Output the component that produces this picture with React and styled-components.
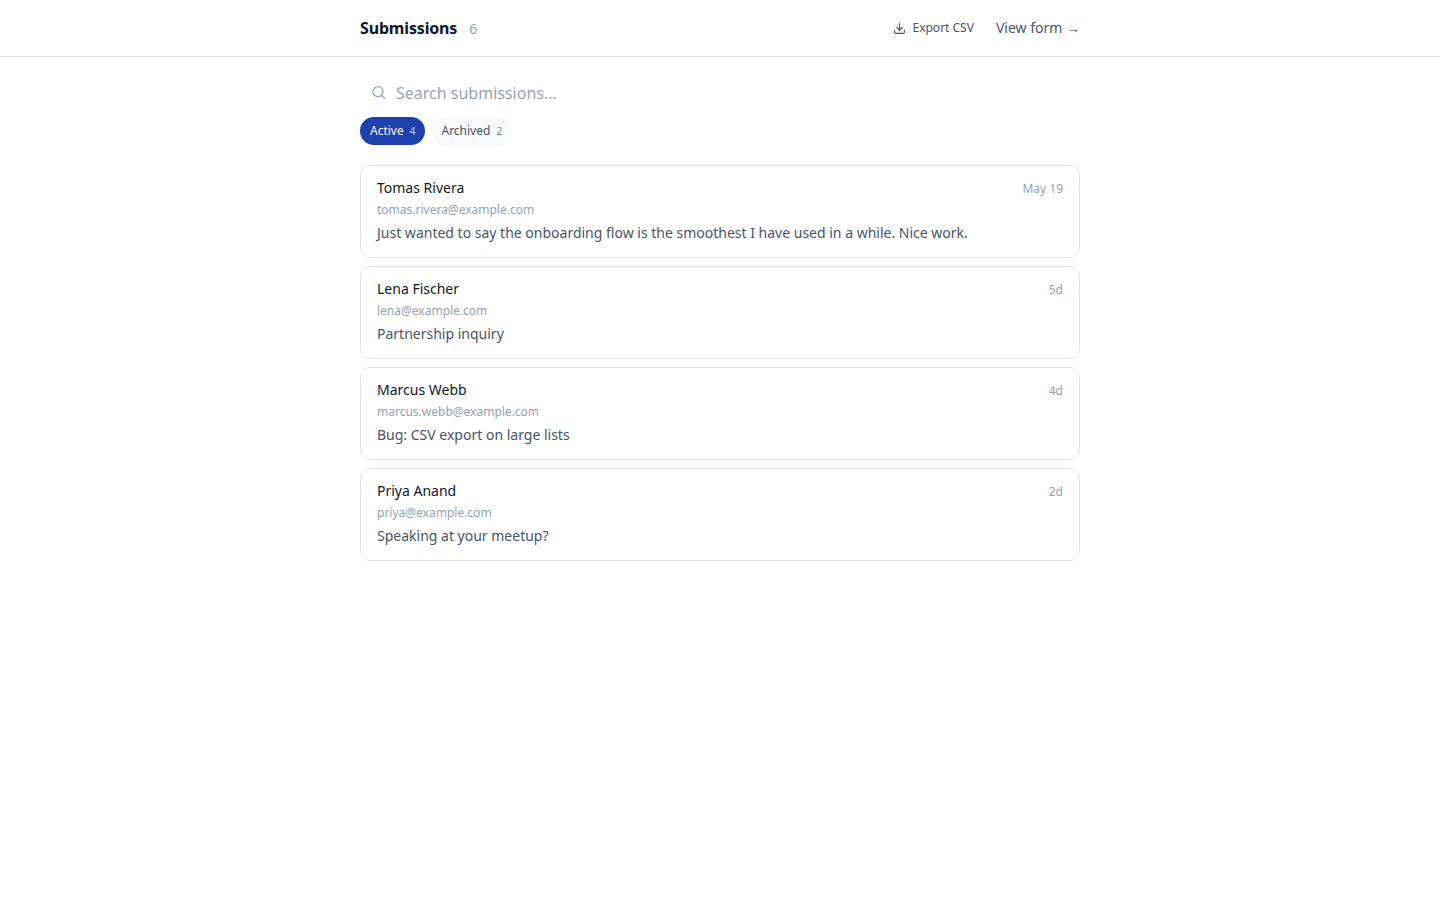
import React, { useState } from "react";
import styled, { createGlobalStyle } from "styled-components";
import { Download } from "lucide-react";

const GlobalStyle = createGlobalStyle`
  *, *::before, *::after { box-sizing: border-box; }
  body {
    margin: 0;
    background: #ffffff;
    color: #0f172a;
    font-family: "Noto Sans", sans-serif;
    font-size: 14px;
    line-height: 20px;
  }
  button, input { font: inherit; color: inherit; }
`;

const Header = styled.header`
  background: #ffffff;
  border-bottom: 1px solid #e2e4e9;
`;

const Container = styled.div`
  width: 100%;
  max-width: 752px;
  margin: 0 auto;
  padding: 0 16px;
`;

const HeaderRow = styled(Container)`
  display: flex;
  align-items: center;
  justify-content: space-between;
  min-height: 56px;
`;

const TitleGroup = styled.div`
  display: flex;
  align-items: baseline;
  gap: 12px;
`;

const Title = styled.h1`
  margin: 0;
  font-size: 16px;
  line-height: 24px;
  font-weight: 700;
  letter-spacing: -0.01em;
`;

const Total = styled.span`
  color: #94a3b8;
`;

const Actions = styled.div`
  display: flex;
  align-items: center;
  gap: 12px;
`;

const ExportButton = styled.button`
  display: inline-flex;
  align-items: center;
  gap: 6px;
  padding: 6px 10px;
  border: 0;
  border-radius: 8px;
  background: transparent;
  color: #475569;
  font-size: 12px;
  line-height: 16px;
  cursor: pointer;
`;

const ViewLink = styled.a`
  color: #475569;
  text-decoration: none;
`;

const Main = styled(Container).attrs({ as: "main" })`
  padding-top: 16px;
  padding-bottom: 32px;
`;

const SearchField = styled.label`
  display: flex;
  align-items: center;
  gap: 9px;
  height: 40px;
  padding: 0 11px;
  color: #94a3b8;
`;

const SearchInput = styled.input`
  flex: 1;
  min-width: 0;
  padding: 0;
  border: 0;
  outline: 0;
  background: transparent;
  color: #0f172a;
  font-size: 16px;
  line-height: 24px;
  &::placeholder { color: #9ca3af; opacity: 1; }
`;

const Filters = styled.div`
  display: flex;
  gap: 6px;
  margin: 4px 0 20px;
`;

const FilterPill = styled.button`
  display: inline-flex;
  align-items: center;
  gap: 6px;
  height: 28px;
  padding: 0 10px;
  border: 0;
  border-radius: 14px;
  background: ${(p) => (p.$active ? "#1e40af" : "#f7f9fb")};
  color: ${(p) => (p.$active ? "#ffffff" : "#475569")};
  font-size: 12px;
  line-height: 16px;
  cursor: pointer;
`;

const PillCount = styled.span`
  font-size: 10px;
  opacity: 0.7;
`;

const List = styled.ul`
  display: flex;
  flex-direction: column;
  gap: 8px;
  margin: 0;
  padding: 0;
  list-style: none;
`;

const Card = styled.li`
  display: flex;
  flex-direction: column;
  gap: 4px;
  padding: 12px 16px 14px;
  border: 1px solid #e2e4e9;
  border-radius: 10px;
  background: #ffffff;
`;

const CardHead = styled.div`
  display: flex;
  align-items: baseline;
  justify-content: space-between;
  gap: 12px;
`;

const Name = styled.span`
  color: #0f172a;
`;

const Meta = styled.span`
  color: #94a3b8;
  font-size: 12px;
  line-height: 16px;
`;

const Message = styled.p`
  margin: 0;
  color: #475569;
  line-height: 21px;
`;

const submissions = [
  { name: "Tomas Rivera", email: "tomas.rivera@example.com", date: "May 19", message: "Just wanted to say the onboarding flow is the smoothest I have used in a while. Nice work." },
  { name: "Lena Fischer", email: "lena@example.com", date: "5d", message: "Partnership inquiry" },
  { name: "Marcus Webb", email: "marcus.webb@example.com", date: "4d", message: "Bug: CSV export on large lists" },
  { name: "Priya Anand", email: "priya@example.com", date: "2d", message: "Speaking at your meetup?" },
];

const filters = [
  { label: "Active", count: 4 },
  { label: "Archived", count: 2 },
];

function SearchIcon() {
  return (
    <svg
      width="16"
      height="16"
      viewBox="0 0 16 16"
      fill="none"
      stroke="currentColor"
      strokeWidth="1.3"
      strokeLinecap="round"
      aria-hidden="true"
    >
      <circle cx="7" cy="6.7" r="5" />
      <path d="M10.7 10.4 14 13.6" />
    </svg>
  );
}

export default function App() {
  const [filter, setFilter] = useState("Active");
  const [query, setQuery] = useState("");

  return (
    <>
      <GlobalStyle />
      <Header>
        <HeaderRow>
          <TitleGroup>
            <Title>Submissions</Title>
            <Total>6</Total>
          </TitleGroup>
          <Actions>
            <ExportButton type="button">
              <Download size={13} aria-hidden="true" />
              Export CSV
            </ExportButton>
            <ViewLink href="#form">View form →</ViewLink>
          </Actions>
        </HeaderRow>
      </Header>
      <Main>
        <SearchField>
          <SearchIcon />
          <SearchInput
            type="text"
            aria-label="Search submissions"
            placeholder="Search submissions…"
            value={query}
            onChange={(e) => setQuery(e.target.value)}
          />
        </SearchField>
        <Filters>
          {filters.map((f) => (
            <FilterPill
              key={f.label}
              type="button"
              $active={filter === f.label}
              aria-pressed={filter === f.label}
              onClick={() => setFilter(f.label)}
            >
              {f.label}
              <PillCount>{f.count}</PillCount>
            </FilterPill>
          ))}
        </Filters>
        <List>
          {submissions.map((s) => (
            <Card key={s.email}>
              <CardHead>
                <Name>{s.name}</Name>
                <Meta>{s.date}</Meta>
              </CardHead>
              <Meta>{s.email}</Meta>
              <Message>{s.message}</Message>
            </Card>
          ))}
        </List>
      </Main>
    </>
  );
}
